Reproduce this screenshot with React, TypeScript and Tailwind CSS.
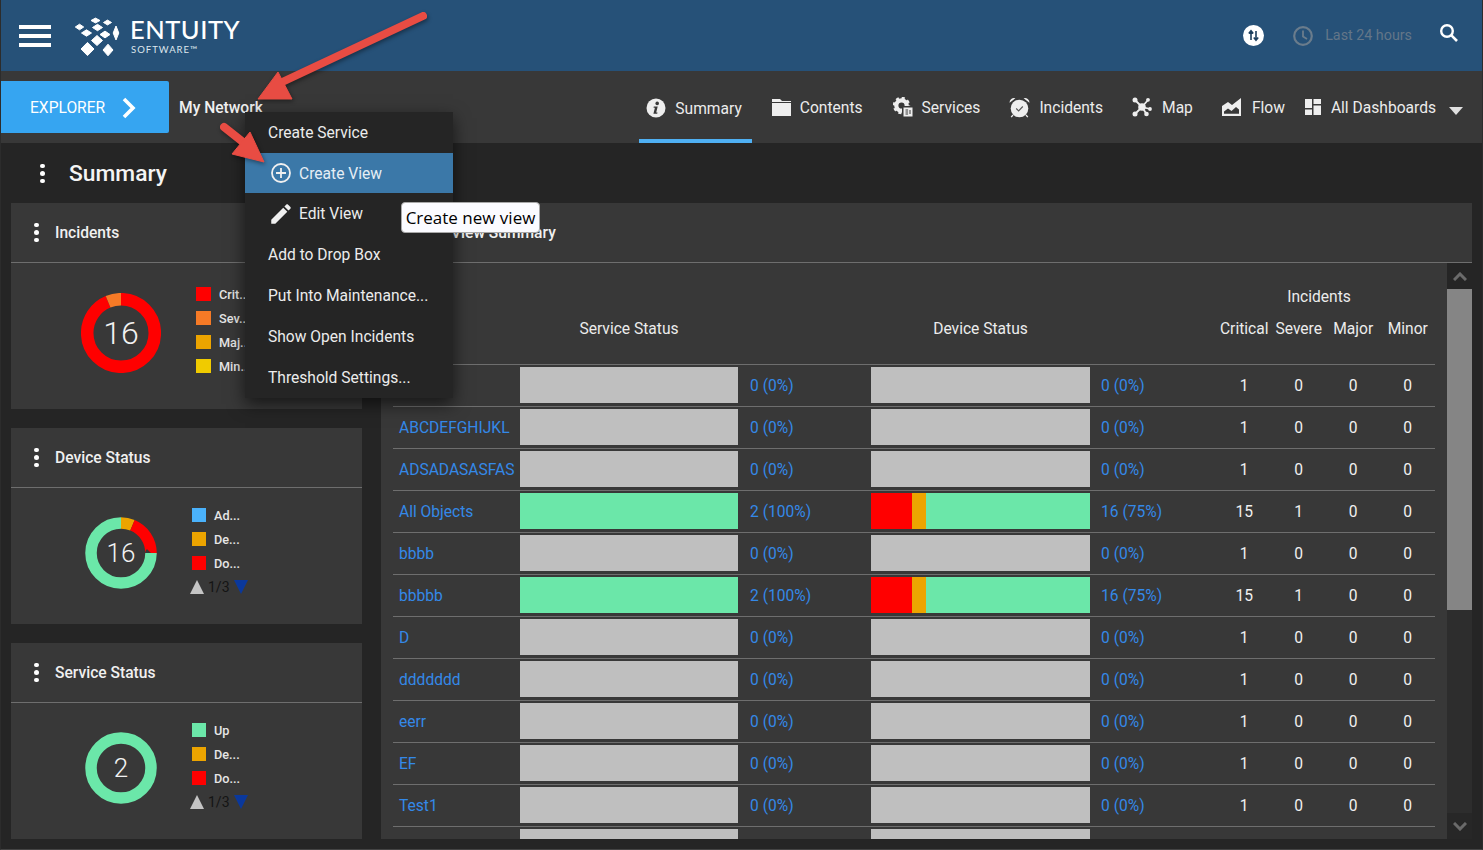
import React from "react";

const ICON = "#eeeeee";
const DARK = "#383838";

function Dots() {
  return (
    <div className="flex flex-col gap-[3px] w-[5px]">
      <span className="w-[5px] h-[4px] rounded-full bg-white" />
      <span className="w-[5px] h-[5px] rounded-full bg-white" />
      <span className="w-[5px] h-[4px] rounded-full bg-white" />
    </div>
  );
}

function Logo() {
  const d: [number, number, number, number][] = [
    [24.5, 9.5, 4.5, 2.4],
    [36.5, 11.5, 4, 2.4],
    [8.5, 16, 4.2, 2.8],
    [26.5, 16.5, 5, 3.2],
    [15.5, 22, 5, 3.2],
    [34, 23.5, 5, 3.4],
    [45, 22, 2.8, 7],
    [26, 29.5, 5.5, 5],
    [16.5, 38, 6.5, 6.6],
    [37, 39, 5, 5.8],
  ];
  return (
    <svg width="50" height="50" viewBox="0 0 50 50" className="shrink-0">
      {d.map(([x, y, a, b], i) => (
        <polygon key={i} points={`${x},${y - b} ${x + a},${y} ${x},${y + b} ${x - a},${y}`} fill="#fff" stroke="#fff" strokeWidth="1" strokeLinejoin="round" />
      ))}
    </svg>
  );
}

function InfoIcon() {
  return (
    <svg width="20" height="20" viewBox="0 0 20 20">
      <circle cx="10" cy="10" r="9.5" fill={ICON} />
      <circle cx="11.2" cy="5.4" r="1.8" fill={DARK} />
      <path d="M7.8 8.6h3.9l-1.5 6h1.3l-.3 1.2H7.4l1.5-6H7.5z" fill={DARK} />
    </svg>
  );
}
function FolderIcon() {
  return (
    <svg width="19" height="19" viewBox="0 0 19 19">
      <path d="M0 1h8l2 2h9v1H0z" fill={ICON} />
      <path d="M0 5h19v13H0z" fill={ICON} />
    </svg>
  );
}
function GearIcon() {
  return (
    <svg width="20" height="20" viewBox="0 0 20 20">
      <circle cx="8.5" cy="8.5" r="5.2" fill="none" stroke={ICON} strokeWidth="4.2" />
      <circle cx="8.5" cy="8.5" r="7.4" fill="none" stroke={ICON} strokeWidth="2.6" strokeDasharray="3 2.81" />
      <rect x="9" y="9" width="11" height="11" fill={DARK} />
      <rect x="10.5" y="10.5" width="9" height="9" fill={ICON} />
      <path d="M12.5 13h2.6M12.5 15h2.6M12.5 17h2.6M17 13v4" stroke={DARK} strokeWidth="1" />
    </svg>
  );
}
function AlarmIcon() {
  return (
    <svg width="21" height="21" viewBox="0 0 21 21">
      <circle cx="10.5" cy="11.5" r="8.8" fill={ICON} />
      <path d="M7.2 11.500l2.400 2.400 4.200-4.400" fill="none" stroke="#555" strokeWidth="1.1" />
      <path d="M.6 5.800A4.400 4.400 0 0 1 6.400 1.200zM20.400 5.800A4.400 4.400 0 0 0 14.600 1.200z" fill={ICON} />
      <path d="M4 18l-1.800 2.200M17 18l1.800 2.200" stroke={ICON} strokeWidth="1.300" />
    </svg>
  );
}
function MapIcon() {
  return (
    <svg width="20" height="20" viewBox="0 0 20 20">
      <path d="M3 3l7 7M16 3l-6 7M18 12l-8-2M3 17l7-7M14.500 17l-4.500-7" stroke={ICON} strokeWidth="1.800" />
      <circle cx="10" cy="10" r="3.800" fill={ICON} />
      <circle cx="3" cy="3" r="2.500" fill={ICON} />
      <circle cx="16" cy="2.800" r="1.900" fill={ICON} />
      <circle cx="18" cy="12" r="1.900" fill={ICON} />
      <circle cx="3" cy="17" r="2.500" fill={ICON} />
      <circle cx="14.500" cy="17" r="2.300" fill={ICON} />
    </svg>
  );
}
function FlowIcon() {
  return (
    <svg width="20" height="18" viewBox="0 0 20 18">
      <path d="M0 8l6-4 4 3 9-7v18H0z" fill={ICON} />
      <path d="M2 15.800v-2.300l4-3 3.500 2.500 4.500-4 3 2.500v4.300z" fill={DARK} />
    </svg>
  );
}
function DashIcon() {
  return (
    <svg width="16" height="16" viewBox="0 0 16 16">
      <path d="M0 0h7v9H0zM8.500 0H16v5H8.500zM0 10.500h7V16H0zM8.500 6.500H16V16H8.500z" fill={ICON} />
    </svg>
  );
}

function Donut({ size, r, w, segs, value, fs }: { size: number; r: number; w: number; segs: [number, number, string][]; value: string; fs: number }) {
  const c = size / 2;
  return (
    <svg width={size} height={size} viewBox={`0 0 ${size} ${size}`} className="shrink-0">
      {segs.map(([start, len, color], i) => (
        <circle
          key={i}
          cx={c}
          cy={c}
          r={r}
          fill="none"
          stroke={color}
          strokeWidth={w}
          pathLength={16}
          strokeDasharray={`${len} ${16 - len}`}
          strokeDashoffset={-start}
          transform={`rotate(-90 ${c} ${c})`}
        />
      ))}
      <text x={c} y={c + fs * 0.355} textAnchor="middle" fontSize={fs} fontWeight={300} fill="#f2f2f2">
        {value}
      </text>
    </svg>
  );
}

function Legend({ items, compact }: { items: [string, string][]; compact?: boolean }) {
  return (
    <div className="flex flex-col">
      {items.map(([label, color]) => (
        <div key={label} className="flex items-center h-[24px] gap-[8px]">
          <span className={compact ? "w-[14px] h-[14px]" : "w-[15px] h-[14px]"} style={{ background: color }} />
          <span className="text-[12.700px] font-medium text-[#e6e6e6] leading-none pt-[2px]">{label}</span>
        </div>
      ))}
      {compact && (
        <div className="flex items-center h-[24px] -ml-[2px] gap-[4px]">
          <svg width="14" height="14" viewBox="0 0 14 14"><path d="M7 0L14 14H0z" fill="#c4c4c4" /></svg>
          <span className="text-[14px] text-[#141414] leading-none">1/3</span>
          <svg width="14" height="14" viewBox="0 0 14 14"><path d="M0 0h14L7 14z" fill="#0a389c" /></svg>
        </div>
      )}
    </div>
  );
}

function CardHeader({ title }: { title: string }) {
  return (
    <div className="h-[60px] flex items-center border-b border-[#6e6e6e] pl-[23px] gap-[16px]">
      <Dots />
      <span className="text-[15.600px] font-medium text-[#f0f0f0] pt-[2px]">{title}</span>
    </div>
  );
}

const G = "#6be7a9";
const R = "#ff0000";
const O = "#eca400";

function GreyBar() {
  return <div className="h-[36px] bg-[#bfbfbf]" />;
}

const rows: { name: string; active?: boolean }[] = [
  { name: "" },
  { name: "ABCDEFGHIJKL" },
  { name: "ADSADASASFAS" },
  { name: "All Objects", active: true },
  { name: "bbbb" },
  { name: "bbbbb", active: true },
  { name: "D" },
  { name: "ddddddd" },
  { name: "eerr" },
  { name: "EF" },
  { name: "Test1" },
];

const gridCols = "grid grid-cols-[127px_218px_133px_219px_127px_repeat(4,54.5px)]";

function Row({ name, active }: { name: string; active?: boolean }) {
  const cls = "text-[15.600px] text-[#3489e8] self-center leading-none whitespace-nowrap pt-[4px]";
  return (
    <div className={`${gridCols} h-[42px] border-t border-[#6e6e6e] pt-[2px] pb-[3px]`}>
      <span className={`${cls} pl-[6px]`}>{name}</span>
      {active ? <div className="h-[36px] bg-[#6be7a9]" /> : <GreyBar />}
      <span className={`${cls} pl-[12px]`}>{active ? "2 (100%)" : "0 (0%)"}</span>
      {active ? (
        <div className="h-[36px] flex">
          <div className="w-[41px] bg-[#ff0000]" />
          <div className="w-[14px] bg-[#eca400]" />
          <div className="flex-1 bg-[#6be7a9]" />
        </div>
      ) : (
        <GreyBar />
      )}
      <span className={`${cls} pl-[11px]`}>{active ? "16 (75%)" : "0 (0%)"}</span>
      {[active ? "15" : "1", active ? "1" : "0", "0", "0"].map((v, i) => (
        <span key={i} className="text-[15.600px] text-[#f0f0f0] self-center text-center leading-none pt-[4px]">{v}</span>
      ))}
    </div>
  );
}

function Tab({ icon, label, className }: { icon: React.ReactNode; label: string; className: string }) {
  return (
    <div className={`flex items-center h-[72px] ${className}`}>
      {icon}
      <span className="text-[15.600px] text-[#ececec] whitespace-nowrap pt-[4px]">{label}</span>
    </div>
  );
}

function MenuItem({ children, active }: { children: React.ReactNode; active?: boolean }) {
  return (
    <div className={`flex items-center text-[15.600px] ${active ? "bg-[#3b78a8] text-[#e6eef5] h-[40px]" : "text-[#ececec] h-[41px]"}`}>
      {children}
    </div>
  );
}

function PlainRows() {
  return (
    <div className={`${gridCols} h-[42px] border-t border-[#6e6e6e] pt-[2px] pb-[3px]`}>
      <span />
      <GreyBar />
      <span />
      <GreyBar />
    </div>
  );
}

export default function App() {
  return (
    <div className="relative w-[1483px] h-[850px] overflow-hidden bg-[#252525] border-l border-r border-b border-[#2c2c2c] border-b-[#444444] [font-family:Roboto,sans-serif]">
      {/* Header */}
      <header className="h-[71px] bg-[#265178] flex items-center pl-[18px] pr-[24px]">
        <div className="flex flex-col gap-[5px] w-[32px] shrink-0">
          <span className="h-[4px] bg-white" />
          <span className="h-[4px] bg-white" />
          <span className="h-[4px] bg-white" />
        </div>
        <div className="ml-[20px]"><Logo /></div>
        <div className="ml-[9px] flex flex-col text-white [font-family:Lato,sans-serif]">
          <span className="text-[25.500px] leading-[27px] tracking-[0.500px] font-medium -mt-[1px] mb-[1px]">ENTUITY</span>
          <span className="text-[9.500px] leading-[11px] tracking-[1px] text-[#dfe7ee] pl-[1px]">SOFTWARE™</span>
        </div>
        <div className="ml-auto flex items-center">
          <svg width="21" height="21" viewBox="0 0 21 21">
            <circle cx="10.500" cy="10.500" r="10.500" fill="#fff" />
            <path d="M8 15V6.500M5.800 8.500L8 5.800l2.200 2.700M13 6v8.500M10.800 12.500l2.200 2.700 2.200-2.700" fill="none" stroke="#1d3f5e" strokeWidth="1.600" />
          </svg>
          <svg width="20" height="20" viewBox="0 0 20 20" className="ml-[29px]">
            <circle cx="10" cy="10" r="8.800" fill="none" stroke="#6a7c8c" strokeWidth="2.200" />
            <path d="M10 4.500V10.500l4 2.500" fill="none" stroke="#6a7c8c" strokeWidth="1.800" />
          </svg>
          <span className="ml-[12px] text-[14.300px] text-[#637688] whitespace-nowrap">Last 24 hours</span>
          <svg width="18" height="18" viewBox="0 0 18 18" className="ml-[28px] -mt-[5px]">
            <circle cx="7" cy="7" r="5.800" fill="none" stroke="#fff" strokeWidth="2.400" />
            <path d="M11.200 11.200L17 17" stroke="#fff" strokeWidth="2.600" />
          </svg>
        </div>
      </header>

      {/* Sub navigation */}
      <nav className="h-[72px] bg-[#383838] flex items-start">
        <div className="mt-[10px] w-[168px] h-[52px] bg-[#36a5f1] rounded-r-[2px] flex items-center pl-[29px] pt-[1px] shrink-0">
          <span className="text-[15.600px] text-white pt-[2px]">EXPLORER</span>
          <svg width="16" height="22" viewBox="0 0 16 22" className="ml-[16px]">
            <path d="M3 2l9 9-9 9" fill="none" stroke="#fff" strokeWidth="3.600" />
          </svg>
        </div>
        <span className="ml-[10px] mt-[26px] text-[15.600px] font-medium text-[#f0f0f0] whitespace-nowrap">My Network</span>
        <div className="ml-auto flex items-start pr-[19px]">
          <Tab icon={<InfoIcon />} label="Summary" className="pl-[7px] pr-[10px] pt-[6px] gap-[9px] border-b-[4px] border-[#4fb0f3]" />
          <Tab icon={<FolderIcon />} label="Contents" className="ml-[20px] gap-[9px]" />
          <Tab icon={<GearIcon />} label="Services" className="ml-[30px] gap-[9px]" />
          <Tab icon={<AlarmIcon />} label="Incidents" className="ml-[29px] gap-[9px]" />
          <Tab icon={<MapIcon />} label="Map" className="ml-[29px] gap-[10px]" />
          <Tab icon={<FlowIcon />} label="Flow" className="ml-[29px] gap-[10px]" />
          <Tab icon={<DashIcon />} label="All Dashboards" className="ml-[20px] gap-[10px]" />
          <svg width="14" height="8" viewBox="0 0 14 8" className="ml-[13px] mt-[36px]">
            <path d="M0 0h14L7 8z" fill="#e0e0e0" />
          </svg>
        </div>
      </nav>

      {/* Title */}
      <div className="h-[60px] flex items-center pl-[39px] gap-[24px]">
        <Dots />
        <h1 className="text-[22.800px] leading-none font-medium text-[#f4f4f4] pt-[2px]">Summary</h1>
      </div>

      {/* Main */}
      <main className="flex pl-[10px] gap-[19px]">
        <div className="w-[351px] flex flex-col gap-[19px] shrink-0">
          <section className="h-[206px] bg-[#383838]">
            <CardHeader title="Incidents" />
            <div className="flex pl-[70px]">
              <div className="pt-[30px]">
                <Donut size={80} r={33.800} w={12.500} fs={32} value="16" segs={[[0, 15, R], [15, 1, "#f67a26"]]} />
              </div>
              <div className="pt-[19px] ml-[35px]">
                <Legend items={[["Crit...", R], ["Sev...", "#f67a26"], ["Maj...", O], ["Min...", "#f0cb00"]]} />
              </div>
            </div>
          </section>
          <section className="h-[196px] bg-[#383838]">
            <CardHeader title="Device Status" />
            <div className="flex pl-[74px]">
              <div className="pt-[29px]">
                <Donut size={72} r={30} w={11.500} fs={26} value="16" segs={[[0, 1, O], [1, 3, R], [4, 12, G]]} />
              </div>
              <div className="pt-[15px] ml-[35px]">
                <Legend compact items={[["Ad...", "#4ab2fb"], ["De...", O], ["Do...", R]]} />
              </div>
            </div>
          </section>
          <section className="h-[196px] bg-[#383838]">
            <CardHeader title="Service Status" />
            <div className="flex pl-[74px]">
              <div className="pt-[29px]">
                <Donut size={72} r={30} w={11.500} fs={26} value="2" segs={[[0, 16, G]]} />
              </div>
              <div className="pt-[15px] ml-[35px]">
                <Legend compact items={[["Up", G], ["De...", O], ["Do...", R]]} />
              </div>
            </div>
          </section>
        </div>

        <section className="w-[1091px] h-[636px] bg-[#383838] flex flex-col shrink-0">
          <div className="h-[60px] border-b border-[#6e6e6e] flex items-center pl-[70px] shrink-0">
            <span className="text-[15.600px] font-medium text-[#f0f0f0] pt-[2px]">View Summary</span>
          </div>
          <div className="flex-1 flex min-h-0">
            <div className="flex-1 px-[12px] overflow-hidden">
              <div className={`${gridCols} h-[101px] text-[15.600px] text-[#ececec]`}>
                <span />
                <span className="text-center pt-[55px] leading-[22px]">Service Status</span>
                <span />
                <span className="text-center pt-[55px] leading-[22px]">Device Status</span>
                <span />
                <div className="col-span-4 pt-[23px] leading-[22px]">
                  <div className="text-center pr-[14px] mb-[10px]">Incidents</div>
                  <div className="grid grid-cols-4 text-center">
                    <span>Critical</span>
                    <span>Severe</span>
                    <span>Major</span>
                    <span>Minor</span>
                  </div>
                </div>
              </div>
              {rows.map((r, i) => (
                <Row key={i} name={r.name} active={r.active} />
              ))}
              <PlainRows />
            </div>
            <div className="w-[25px] flex flex-col shrink-0 bg-[#2d2d2d]">
              <div className="h-[26px] bg-[#252525] flex items-center justify-center">
                <svg width="14" height="9" viewBox="0 0 14 9"><path d="M1 8l6-6 6 6" fill="none" stroke="#6a6a6a" strokeWidth="3" /></svg>
              </div>
              <div className="h-[321px] bg-[#858585]" />
              <div className="flex-1" />
              <div className="h-[26px] bg-[#272727] flex items-center justify-center">
                <svg width="14" height="9" viewBox="0 0 14 9"><path d="M1 1l6 6 6-6" fill="none" stroke="#6a6a6a" strokeWidth="3" /></svg>
              </div>
            </div>
          </div>
        </section>
      </main>

      {/* Context menu */}
      <div className="absolute left-[244px] top-[112px] w-[208px] h-[286px] bg-[#252525] shadow-[0_6px_16px_rgba(0,0,0,0.6)]">
        <MenuItem><span className="pl-[23px] pt-[2px]">Create Service</span></MenuItem>
        <MenuItem active>
          <svg width="20" height="20" viewBox="0 0 20 20" className="ml-[26px]">
            <circle cx="10" cy="10" r="9" fill="none" stroke="#f0f0f0" strokeWidth="1.800" />
            <path d="M10 5v10M5 10h10" stroke="#f0f0f0" strokeWidth="1.800" />
          </svg>
          <span className="ml-[8px] pt-[4px]">Create View</span>
        </MenuItem>
        <MenuItem>
          <svg width="26" height="26" viewBox="0 0 24 24" className="ml-[23px]">
            <path d="M3 17.250V21h3.750L17.810 9.940l-3.750-3.750L3 17.250zM20.710 7.040c.39-.39.39-1.020 0-1.410l-2.340-2.340c-.39-.39-1.020-.39-1.410 0l-1.830 1.830 3.750 3.750 1.830-1.830z" fill="#f0f0f0" />
          </svg>
          <span className="ml-[5px] pt-[2px]">Edit View</span>
        </MenuItem>
        <MenuItem><span className="pl-[23px] pt-[2px]">Add to Drop Box</span></MenuItem>
        <MenuItem><span className="pl-[23px] pt-[2px]">Put Into Maintenance...</span></MenuItem>
        <MenuItem><span className="pl-[23px] pt-[2px]">Show Open Incidents</span></MenuItem>
        <MenuItem><span className="pl-[23px] pt-[2px]">Threshold Settings...</span></MenuItem>
      </div>

      {/* Tooltip */}
      <div className="absolute left-[400px] top-[202px] w-[139px] h-[31px] pt-[1px] bg-[#fbfbff] border border-[#a8a8a8] rounded-[4px] flex items-center justify-center text-black text-[17px] [font-family:'Open_Sans',sans-serif] whitespace-nowrap">
        Create new view
      </div>

      {/* Annotation arrows */}
      <svg width="1483" height="850" viewBox="0 0 1483 850" className="absolute -left-px top-0 pointer-events-none drop-shadow-[1px_2px_2px_rgba(0,0,0,0.4)]">
        <path d="M423 16L278 84" stroke="#e84c43" strokeWidth="8" strokeLinecap="round" />
        <path d="M258 99L278 72 292 99z" fill="#e84c43" stroke="#e84c43" strokeLinejoin="round" />
        <path d="M224 127L248 146" stroke="#e84c43" strokeWidth="8" strokeLinecap="round" />
        <path d="M264 162L250 132 232 154z" fill="#e84c43" stroke="#e84c43" strokeLinejoin="round" />
      </svg>
    </div>
  );
}
